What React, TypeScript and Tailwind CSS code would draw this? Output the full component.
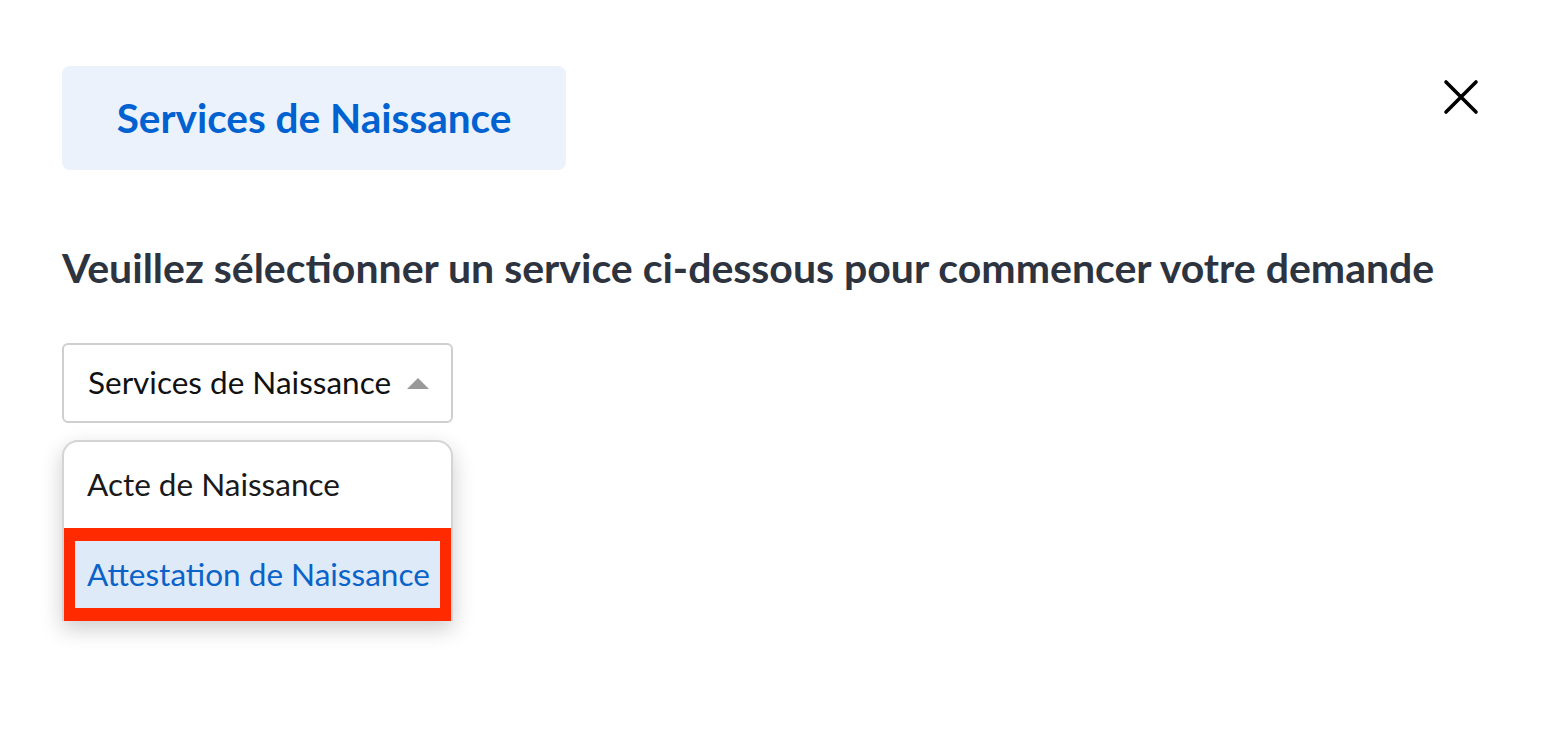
import { useState } from 'react'

const services = ['Acte de Naissance', 'Attestation de Naissance']

export default function App() {
  const [open] = useState(true)
  const [active] = useState(1)

  return (
    <div
      className="min-h-[753px] w-full bg-white pl-[62px] pr-[75px] pt-[66px]"
      style={{ fontFamily: 'Lato, "Noto Sans", sans-serif' }}
    >
      {/* Cabecera */}
      <div className="flex items-start justify-between">
        <div className="flex h-[104px] w-[504px] items-center justify-center rounded-lg bg-[#ebf2fc]">
          <h1 className="text-[40.5px] font-bold leading-none text-[#0062d1]">Services de Naissance</h1>
        </div>
        <button className="mt-[9px] p-1 text-black">
          <svg width="36" height="36" viewBox="0 0 36 36" fill="none" stroke="currentColor" strokeWidth="3.6" strokeLinecap="round">
            <path d="M3 3 L33 33 M33 3 L3 33" />
          </svg>
        </button>
      </div>

      <p className="mt-[77px] text-[41px] font-bold leading-none text-[#2d3440]">
        Veuillez sélectionner un service ci-dessous pour commencer votre demande
      </p>

      {/* Sélecteur */}
      <div className="mt-[55px] w-[391px]">
        <div className="flex h-[80px] items-center justify-between rounded-md border-2 border-[#cfcfcf] pl-[24px] pr-[22px]">
          <span className="text-[31.5px] leading-none text-[#111]">Services de Naissance</span>
          <svg width="22" height="11" viewBox="0 0 22 11">
            <path d="M11 0 L22 11 L0 11 Z" fill="#999" />
          </svg>
        </div>

        {open && (
          <div className="mt-[17px] overflow-hidden rounded-t-2xl border-2 border-b-0 border-[#d4d4d4] bg-white shadow-[0_8px_22px_rgba(0,0,0,0.2)]">
            {services.map((s, i) =>
              i === active ? (
                <div key={s} className="-mx-[2px] border-[13px] border-[#ff2a00] bg-[#deeaf8]">
                  <div className="flex h-[67px] items-center pl-[12px] text-[31.5px] leading-none text-[#0a63c9]">{s}</div>
                </div>
              ) : (
                <div key={s} className="flex h-[86px] items-center pl-[23px] text-[31.5px] leading-none text-[#1a1a1a]">
                  {s}
                </div>
              )
            )}
          </div>
        )}
      </div>
    </div>
  )
}
